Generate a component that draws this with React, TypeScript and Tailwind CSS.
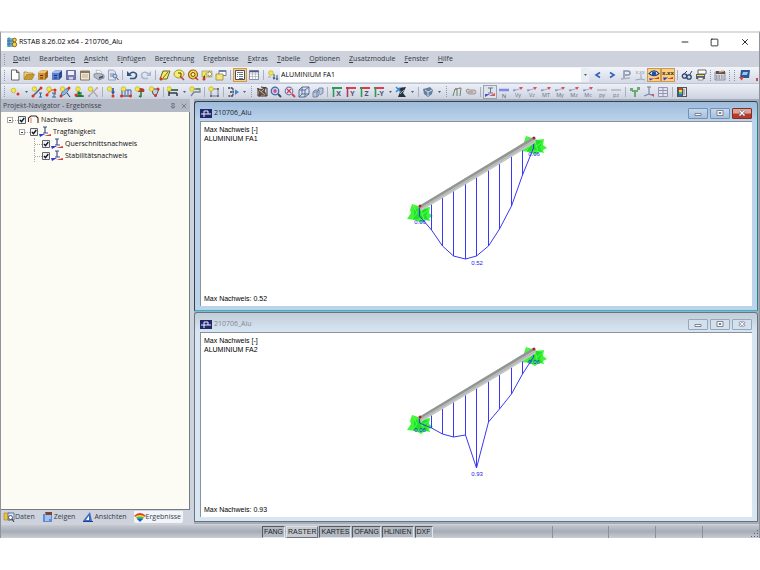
import type { ReactNode } from 'react';
import { Minus, Square, X, Pin } from 'lucide-react';
import clsx from 'clsx';

const ball = (x: number, y: number) => (
  <circle cx={x} cy={y} r="2.3" fill="#f7e840" stroke="#a39a1c" strokeWidth="0.5" />
);
const node = (x: number, y: number) => <circle cx={x} cy={y} r="1.5" fill="#e0301e" />;

const resultLabel = (text: string) => (
  <>
    <path d="M1 5l9-3" stroke="#9a9fb0" strokeWidth="0.8" />
    <path d="M7 1l4 0-2 3z" fill="#d9506a" />
    <path d="M1 3.5h3l-2 2z" fill="#7a7de0" />
    <text x="6" y="11" fontSize="5.5" textAnchor="middle" fill="#6c7080">
      {text}
    </text>
  </>
);

const axisLabel = (text: string, bar: string, leg: string) => (
  <>
    <path d="M1 2h10" stroke={bar} strokeWidth="2" />
    <path d="M2.5 1v10" stroke={leg} strokeWidth="1.6" />
    <text x="7.5" y="10" fontSize="7" fontWeight="bold" textAnchor="middle" fill="#4a536b">
      {text}
    </text>
  </>
);

// all drawings use a 12 x 12 box
const icons: Record<string, ReactNode> = {
  new: <path d="M2.5 1h5l2.500 2.500V11h-7.500zM7.500 1v2.500H10" fill="#fff" stroke="#444" strokeWidth="0.8" />,
  open: (
    <>
      <path d="M1 10V3h3l1 1h5v2" fill="#f3d36b" stroke="#8a6a1a" strokeWidth="0.6" />
      <path d="M1 10.500l2.500-5h8l-2.500 5z" fill="#c79a2c" stroke="#8a6a1a" strokeWidth="0.5" />
    </>
  ),
  project: (
    <>
      <path d="M1 4l3-2.500h7V8l-3 3H1z" fill="#9c6216" />
      <path d="M1 4l3-2.500h7L8 4z" fill="#f1c574" />
      <path d="M1 4h7v7H1z" fill="#cf9440" />
      <path d="M3 6.500h3M3 9h3" stroke="#5b3406" />
    </>
  ),
  block: (
    <>
      <path d="M1 4l3-2.500h7V8l-3 3H1z" fill="#274693" />
      <path d="M1 4l3-2.500h7L8 4z" fill="#a9bff0" />
      <path d="M1 4h7v7H1z" fill="#5c7ccc" />
      <path d="M3 6.500h3M3 9h3" stroke="#1b2f6c" />
    </>
  ),
  save: (
    <>
      <path d="M1.500 1.500h9v9h-9z" fill="#7a7cb4" stroke="#575a90" strokeWidth="0.8" />
      <path d="M3 2h6v4H3z" fill="#eef0fa" />
      <path d="M4 8h4v2.500H4z" fill="#cfd2ea" />
    </>
  ),
  report: (
    <>
      <path d="M1.500 2h9v9h-9z" fill="#efe6d2" stroke="#6b5a45" strokeWidth="0.8" />
      <path d="M1.500 2h9v2h-9z" fill="#8b7459" />
      <path d="M3 6h6M3 8h6" stroke="#a79c8b" strokeWidth="0.7" />
    </>
  ),
  print: (
    <>
      <path d="M3 1l5 1 1 4-5-1z" fill="#fff" stroke="#8c90a0" strokeWidth="0.5" />
      <path d="M1 5l5-1 5 2v3l-5 2-5-3z" fill="#b5bac6" stroke="#626878" strokeWidth="0.6" />
      <path d="M6 8l4-1.500v2L6 10z" fill="#4f566a" />
    </>
  ),
  preview: (
    <>
      <path d="M1.500 1h5l2 2v8h-7z" fill="#dfe3ee" stroke="#747b8f" strokeWidth="0.6" />
      <path d="M3 5h4M3 7h3" stroke="#5573a6" strokeWidth="0.8" />
      <circle cx="8" cy="7" r="2" fill="#b8d2ee" stroke="#47669a" strokeWidth="0.8" />
      <path d="M9.500 8.500l2 2.500" stroke="#555" />
    </>
  ),
  undo: (
    <>
      <path d="M1 2v5h5z" fill="#33527e" />
      <path d="M3 5.500q4-4 7-1 1.500 3-1.500 5H4" fill="none" stroke="#33527e" strokeWidth="1.600" />
    </>
  ),
  redo: (
    <>
      <path d="M11 2v5H6z" fill="#a6b7cf" />
      <path d="M9 5.500q-4-4-7-1-1.500 3 1.500 5H8" fill="none" stroke="#a6b7cf" strokeWidth="1.600" />
    </>
  ),
  plane: (
    <>
      <path d="M4 2h7L8 10H1z" fill="#f5ea63" stroke="#5b5713" strokeWidth="0.9" />
      <path d="M4 9l5-6" stroke="#333" strokeWidth="0.7" />
      {node(2, 10)}
    </>
  ),
  wedge: (
    <>
      <ellipse cx="6" cy="5" rx="5" ry="4" fill="#f8ee6e" stroke="#8c811b" strokeWidth="0.8" />
      <path d="M5 4h3v3" stroke="#4b4408" fill="none" />
      <path d="M7 7l4 4" stroke="#c0392b" strokeWidth="1.400" />
    </>
  ),
  target: (
    <>
      <circle cx="6" cy="5.500" r="4.500" fill="#f8dd51" stroke="#a0571a" strokeWidth="1.200" />
      <circle cx="6" cy="5.500" r="2" fill="#fff3a0" stroke="#6b4a12" />
      <path d="M8 8l3 3" stroke="#c0392b" strokeWidth="1.400" />
    </>
  ),
  select: (
    <>
      <path d="M1 2h10v6H1z" fill="#f3e65a" stroke="#8f8750" strokeWidth="0.6" />
      <path d="M5 4h3V2l3 3-3 3V6H5z" fill="#fff" stroke="#555" strokeWidth="0.5" />
      <path d="M2 8l2-2v5z" fill="#554a2a" />
      {node(3, 10)}
    </>
  ),
  layers: (
    <>
      <path d="M4 1.500h7v5H4z" fill="#fff" stroke="#53607c" strokeWidth="0.8" />
      <path d="M4 1.500h7v1.500H4z" fill="#6b83b5" />
      <path d="M1 5h7v6H1z" fill="#f5e67c" stroke="#8e803b" strokeWidth="0.7" />
    </>
  ),
  navigator: (
    <>
      <path d="M1.500 1.500h9v9h-9z" fill="#fff" stroke="#444c60" />
      <path d="M3 3.500h6M3 5.500h1M5 5.500h4M3 7.500h1M5 7.500h4M5 9.500h4" stroke="#5b647c" strokeWidth="0.9" />
    </>
  ),
  table: (
    <>
      <path d="M1.500 1.500h9v9h-9z" fill="#fff" stroke="#69728a" strokeWidth="0.8" />
      <path d="M1.500 2.500h9" stroke="#4e5a76" strokeWidth="1.600" />
      <path d="M1.500 5h9M1.500 7.500h9M4.500 3v7.500M7.500 3v7.500" stroke="#9aa1b3" strokeWidth="0.6" />
    </>
  ),
  loadcase: (
    <>
      {ball(4, 4)}
      <path d="M7 5v4M10 6v4" stroke="#39527e" strokeWidth="1" />
      <path d="M5.500 8.500h3L7 11zM8.500 9.500h3L10 11.500z" fill="#39527e" />
      <path d="M1 8h3" stroke="#aaa" />
    </>
  ),
  prev: <path d="M8 3.500L4 6l4 2.500" fill="none" stroke="#2f62bf" strokeWidth="1.600" />,
  next: <path d="M4 3.500L8 6 4 8.500" fill="none" stroke="#2f62bf" strokeWidth="1.600" />,
  faded: (
    <>
      <path d="M4 9V2h4a2 2 0 010 4H5" fill="none" stroke="#8293ad" strokeWidth="1.500" />
      <path d="M1 10l9-1" stroke="#a8b3c6" strokeWidth="1.500" />
    </>
  ),
  values: (
    <>
      <text x="6" y="4.500" fontSize="5" textAnchor="middle" fill="#858c9b">x.xx</text>
      <path d="M7 5v5L1.500 11M7 10l4 1" stroke="#9aa6bb" fill="none" />
    </>
  ),
  eye: (
    <>
      <path d="M1 4.500Q6-1 11 4.500 6 9 1 4.500z" fill="#fff" stroke="#20407c" strokeWidth="1.100" />
      <circle cx="6" cy="4.500" r="2.200" fill="#1d4f9f" />
      <path d="M1 9.500h5L2 11.500z" fill="#283fd0" />
      <path d="M5 10l6-2v2z" fill="#ca3e28" />
    </>
  ),
  xxx: (
    <>
      <text x="6" y="6" fontSize="6" fontWeight="bold" textAnchor="middle" fill="#423822">x.xx</text>
      <path d="M1 8.500h5L2 11.500z" fill="#283fd0" />
      <path d="M5 10l6-2v2z" fill="#ca3e28" />
    </>
  ),
  glasses: (
    <>
      <circle cx="3.500" cy="7" r="2.200" fill="#cfdcf0" stroke="#2d4369" strokeWidth="1.300" />
      <circle cx="8" cy="8" r="2.200" fill="#cfdcf0" stroke="#2d4369" strokeWidth="1.300" />
      <path d="M3 5l3-3M8.500 6L11 2" stroke="#2d4369" />
    </>
  ),
  printGraphic: (
    <>
      <path d="M3 1h8v4H3z" fill="#fff" stroke="#444" strokeWidth="0.8" />
      <path d="M1 5h9v5H1z" fill="#59616f" />
      <path d="M2 6.500h7" stroke="#efe04b" />
      <path d="M3 8.500h5V11H3z" fill="#fff" stroke="#444" strokeWidth="0.5" />
    </>
  ),
  calc: (
    <>
      <path d="M1 3h10v8H1z" fill="#d8d9dc" stroke="#596071" strokeWidth="0.6" />
      <path d="M2 2h9v3H2z" fill="#5e514a" />
      <path d="M5 3l5-1" stroke="#d5a27d" strokeWidth="1.500" />
      <path d="M2 7h8M2 9h8" stroke="#687086" strokeDasharray="1.500 1" />
    </>
  ),
  module: (
    <>
      <path d="M3 1h9l-1 8H2z" fill="#2b5798" />
      <path d="M5 3h5l-1 3H4z" fill="#9dc5e8" />
      <path d="M1 8h5l-2.500 3.500z" fill="#e44028" />
    </>
  ),
  point: (
    <>
      {ball(4.500, 4.500)}
      {node(9, 8)}
    </>
  ),
  line: (
    <>
      <path d="M2 10l8-8" stroke="#4a5a78" strokeWidth="1.500" />
      {ball(3.500, 3)}
      {node(2, 10)}
      {node(10, 2)}
      <path d="M8 7h3M9.500 7v4M8 11h3" stroke="#3266ad" />
    </>
  ),
  arc: (
    <>
      <path d="M2 9q3-6 8-5v5" fill="none" stroke="#e36b24" strokeWidth="1.300" />
      {ball(4, 3)}
      {node(2, 9)}
      {node(10, 4)}
      <path d="M7 7h4M9 7v4M7 11h4" stroke="#3266ad" />
    </>
  ),
  member: (
    <>
      <path d="M2 10q0-6 8-8-1 6-8 8z" fill="#8cb4e0" stroke="#456a98" strokeWidth="0.9" />
      {ball(3.500, 3)}
      {node(2, 10)}
      {node(10, 2)}
      <path d="M8 7l3 4" stroke="#333" />
    </>
  ),
  support: (
    <>
      <path d="M5 4l3 3-1 0 4 4H2l3-3H4z" fill="#2a9648" />
      <path d="M5 7h4M3 10h8" stroke="#155c2b" />
      {ball(5, 3)}
      {node(3, 9)}
    </>
  ),
  release: (
    <>
      <path d="M2 10l8-8M4 3l6 7" stroke="#aaa" strokeWidth="1.200" />
      {ball(3.500, 3)}
      <circle cx="2" cy="10" r="1" fill="#e0807a" />
      <circle cx="10" cy="2" r="1" fill="#e69a92" />
      <circle cx="10" cy="10" r="1" fill="#e69a92" />
    </>
  ),
  nodeLoad: (
    <>
      {ball(3.500, 3)}
      <path d="M7 2v5" stroke="#2e5597" strokeWidth="1.600" />
      <path d="M5 5.500h4L7 9z" fill="#2e5597" />
      {node(7, 10)}
    </>
  ),
  memberLoad: (
    <>
      <path d="M2 4h9v6M2 4v6M5 4v5M8 4v5" fill="none" stroke="#3a65a9" />
      <path d="M1 10h10" stroke="#333" />
      {ball(3.500, 3)}
      {node(1.500, 10)}
      {node(10.500, 10)}
    </>
  ),
  moment: (
    <>
      <path d="M6 2q6 0 4 4H4q0-4 2-4z" fill="#b33b30" />
      <path d="M7 5v6M5 10l2 1" stroke="#2c7b35" strokeWidth="1.500" />
      {ball(3.500, 3)}
    </>
  ),
  imposed: (
    <>
      <path d="M4 3h7L8 10 5 8z" fill="#c9d0df" stroke="#394256" strokeWidth="0.9" />
      {ball(3.500, 3)}
      {node(10, 3)}
      {node(7.500, 9.500)}
    </>
  ),
  frame: (
    <>
      <path d="M1 4h10M2 4v6M10 7v3M2 7h8" fill="none" stroke="#333a46" strokeWidth="1.500" />
      {ball(2, 3)}
      <path d="M4 4h6" stroke="#319040" strokeWidth="1" />
    </>
  ),
  comment: (
    <>
      <path d="M3 3h8v3H5l-3 4" fill="none" stroke="#79828f" strokeWidth="1.300" />
      {ball(3, 3)}
      <path d="M7 3h4" stroke="#3b8d45" />
    </>
  ),
  bounds: (
    <>
      <path d="M3 3h7v7H3z" fill="none" stroke="#58627a" strokeWidth="0.8" />
      {ball(3, 3)}
      <path d="M9 2h2v2H9zM9 9h2v2H9zM2 9h2v2H2z" fill="#68728a" />
    </>
  ),
  arrowSet: (
    <>
      <path d="M1 2h5v8H1M3 6h4" fill="none" stroke="#3b4558" strokeWidth="1.300" strokeDasharray="2 .6" />
      <path d="M8 3.500L12 6l-4 3z" fill="#4680cc" />
    </>
  ),
  shade: (
    <>
      <path d="M1 2l4 1 5-2-1 4 2 5-5-1-4 2 1-5z" fill="#634c41" />
      <path d="M2 2v8M5 1l6 1v8H3" fill="none" stroke="#40332c" />
      <path d="M3 4l6 5M8 3L5 6" stroke="#cfc6be" strokeWidth="0.8" />
    </>
  ),
  zoomIn: (
    <>
      <circle cx="5" cy="5" r="3.800" fill="#bfd0f2" stroke="#4560ac" strokeWidth="1.200" />
      <path d="M5 3v4M3 5h4" stroke="#d93848" strokeWidth="1.200" />
      <path d="M8 8l3 3" stroke="#3d475c" strokeWidth="1.800" />
    </>
  ),
  zoomWindow: (
    <>
      <circle cx="5" cy="5" r="3.800" fill="#e5ecf8" stroke="#6d7fba" strokeWidth="1.200" />
      <path d="M3 3l4 4M7 3L3 7" stroke="#d93848" strokeWidth="1.300" />
      <path d="M8 8l3 3" stroke="#d93848" strokeWidth="1.800" />
    </>
  ),
  cube: <path d="M1 4h6v7H1zM1 4l3-3h7L7 4M11 1v7l-4 3M4 1v7h7M4 8l-3 3" fill="#dce5f3" fillOpacity="0.5" stroke="#4b628e" strokeWidth="0.9" />,
  cubes: <path d="M1 6h4v5H1zM1 6l2-2h4v5l-2 2M6 4l1-2h4v5L8 9M5 6l2-2" fill="#b7c7de" stroke="#637699" strokeWidth="0.8" />,
  axX: axisLabel('X', '#2b9b55', '#2b9b55'),
  axY: axisLabel('Y', '#dd3d50', '#b43a58'),
  axZ: axisLabel('Z', '#dd3d3d', '#2b9b55'),
  axMinusY: axisLabel('-Y', '#dd3d50', '#2b9b55'),
  render: (
    <>
      <path d="M3 2l8-1-3 6 3 4H3l2-5z" fill="#28303c" />
      <path d="M1 1l5 5M1 6l4-4" stroke="#3a8bd6" strokeWidth="1.600" />
      <path d="M5 8l4-4" stroke="#c7d2de" strokeWidth="0.8" />
    </>
  ),
  gear: (
    <>
      <path d="M1 3l4-1 3-1 3 3-1 4-4 3-4-3z" fill="#65809f" />
      <path d="M3 4l3 2 4-2M6 6v4" stroke="#d5dfeb" fill="none" />
    </>
  ),
  frameView: (
    <>
      <path d="M2 10L4 3l6-1-1 8M4 3h2v7" fill="none" stroke="#5a7c64" strokeWidth="0.9" />
      <path d="M4 3l6-1" stroke="#d38178" strokeWidth="0.8" />
    </>
  ),
  section: (
    <>
      <path d="M1 4q2-2 4 0h5q2 3 0 4H4Q1 7 1 4z" fill="#c9cac9" stroke="#8b8f8e" strokeWidth="0.8" />
      <path d="M3 6h5" stroke="#c25b55" strokeWidth="0.7" />
    </>
  ),
  beam: (
    <>
      <path d="M4 2h5M6.500 2v5M4 7h5" stroke="#647291" strokeWidth="1" />
      <path d="M5 10l6-3v3z" fill="#d65a5a" />
      <path d="M1 8h5l-5 3z" fill="#4b50d8" />
    </>
  ),
  n: (
    <>
      <path d="M1 4h10" stroke="#8286e4" strokeWidth="2.500" />
      <text x="6" y="11.500" fontSize="6" textAnchor="middle" fill="#5a5f70">N</text>
    </>
  ),
  vy: resultLabel('Vy'),
  vz: resultLabel('Vz'),
  mt: resultLabel('MT'),
  my: resultLabel('My'),
  mz: resultLabel('Mz'),
  mu: resultLabel('Mc'),
  py: (
    <>
      <path d="M1 4h10" stroke="#a6a8bd" strokeWidth="1.200" />
      <text x="6" y="11" fontSize="5.500" textAnchor="middle" fill="#6c7080">py</text>
    </>
  ),
  pz: (
    <>
      <path d="M1 4h10" stroke="#a6a8bd" strokeWidth="1.200" />
      <text x="6" y="11" fontSize="5.500" textAnchor="middle" fill="#6c7080">pz</text>
    </>
  ),
  reaction: <path d="M1 2h3v3H1zM8 1h3v3H8zM5 4h2v7H5zM3 4h6v2H3z" fill="#6fa873" />,
  profile: (
    <>
      <path d="M4 1h4M6 1v7M6 8l5 2M6 8l-5 2" stroke="#7181a8" strokeWidth="1.100" />
      <path d="M8 8h3v3z" fill="#d9506a" />
    </>
  ),
  gridView: <path d="M1.500 1.500h9v9h-9zM1.500 4.500h9M1.500 7.500h9M6 1.500v9" fill="#e1e3f0" stroke="#8e8fae" strokeWidth="0.9" />,
  scale: (
    <>
      <path d="M1 1h10v10H1z" fill="#50545c" />
      <path d="M3 2h3v2H3z" fill="#e4402a" />
      <path d="M3 4h3v2H3z" fill="#f2e23d" />
      <path d="M3 6h3v2H3z" fill="#43c35a" />
      <path d="M3 8h3v2H3z" fill="#3765da" />
      <path d="M7 2h3v8H7z" fill="#e3e4e8" />
      <path d="M7 4h2M7 6h2M7 8h2" stroke="#555" strokeWidth="0.7" />
    </>
  ),
  portal: (
    <>
      <path d="M1.500 8V4L4 2h5l2 2v5" fill="none" stroke="#3a2a2a" strokeWidth="1.100" />
      <path d="M4 9V4" stroke="#d47f76" />
    </>
  ),
  check: (
    <>
      <path d="M4 1h4M6 1v6M4 7h5" stroke="#3c4f91" strokeWidth="1.200" />
      <path d="M5 10l7-2v2z" fill="#d93a3a" />
      <path d="M0 8h6l-5 3z" fill="#3238d2" />
    </>
  ),
  tabData: (
    <>
      <path d="M1 2h6v7H1z" fill="#f0c040" stroke="#a67c13" strokeWidth="0.6" />
      <path d="M5 2h6v7H5z" fill="#dbe7fa" stroke="#3b5fa6" strokeWidth="0.8" />
      <circle cx="7.500" cy="6.500" r="2" fill="#fff" stroke="#333" strokeWidth="0.8" />
      <path d="M9 8l2 3" stroke="#333" />
    </>
  ),
  tabShow: (
    <>
      <path d="M1 3h9v8H1z" fill="#5e8cd8" />
      <path d="M3 5h6M3 7h6M3 9h4" stroke="#fff" strokeWidth="0.9" />
      <path d="M3 1h7v3H4z" fill="#764637" />
    </>
  ),
  tabViews: (
    <>
      <path d="M1 10h9L8 1 4 6z" fill="#3f69c7" />
      <path d="M6 6l1-1v4H4z" fill="#fff" />
      <path d="M1 10.500h10" stroke="#243f80" />
    </>
  ),
  tabResults: (
    <>
      <path d="M0 5q6-6 12 0L9 7H3z" fill="#e23a26" />
      <path d="M1 5.500q5-3 10 0L8 8H4z" fill="#f4e23a" />
      <path d="M2 6.500q4-2 8 0L8 9H4z" fill="#3dc35a" />
      <path d="M3 8q3-1 6 0l-3 3z" fill="#2b55d9" />
    </>
  ),
  app: (
    <>
      <path d="M1 2h7v9H1z" fill="#72b2d8" />
      <path d="M3 1v10M1 5h7M1 8h6" stroke="#33698e" strokeWidth="0.8" />
      <circle cx="8.500" cy="4" r="1.800" fill="#f4d54a" stroke="#8a6414" />
      <circle cx="8.500" cy="8.500" r="2.200" fill="#f4d54a" stroke="#8a6414" />
    </>
  ),
  doc: (
    <>
      <path d="M0 2h12v9H0z" fill="#20286b" />
      <path d="M1 7h10M4 4v6M8 4v3M4 4h4" stroke="#eef0ff" strokeWidth="1" fill="none" />
    </>
  ),
};

function Icon({ name }: { name: string }) {
  return (
    <svg viewBox="0 0 12 12" className="h-3 w-3 shrink-0" aria-hidden="true">
      {icons[name]}
    </svg>
  );
}

function Tool({ name, active = false }: { name: string; active?: boolean }) {
  return (
    <button
      type="button"
      aria-label={name}
      className={clsx(
        'flex h-[14px] w-[14px] shrink-0 items-center justify-center',
        active && 'bg-[#fbcf7d] outline -outline-offset-1 outline-[#c99a55]'
      )}
    >
      <Icon name={name} />
    </button>
  );
}

function Grip({ wide = false }: { wide?: boolean }) {
  return (
    <span className={clsx('flex shrink-0 justify-center', wide ? 'w-[7px]' : 'w-[5px]')}>
      <span className="h-[11px] border-l border-dotted border-[#8e95a5]" />
    </span>
  );
}

function Sep() {
  return (
    <span className="flex w-[5px] shrink-0 justify-center">
      <span className="h-[10px] border-l border-[#a9b0bf]" />
    </span>
  );
}

function Drop() {
  return (
    <button type="button" aria-label="more" className="flex h-[14px] w-2 shrink-0 items-center justify-center">
      <svg viewBox="0 0 6 4" className="h-[2px] w-[3px]" aria-hidden="true">
        <path d="M0 0h6L3 4z" fill="#555c6b" />
      </svg>
    </button>
  );
}

// "|" separator, ":" grip, "v" drop-down arrow, "*" marks a pressed button
function Tools({ items }: { items: string }) {
  return (
    <>
      {items.split(' ').map((item, i) => {
        if (item === '|') return <Sep key={i} />;
        if (item === ':') return <Grip key={i} />;
        if (item === '::') return <Grip key={i} wide />;
        if (item === 'v') return <Drop key={i} />;
        return <Tool key={i} name={item.replace('*', '')} active={item.startsWith('*')} />;
      })}
    </>
  );
}

// [label, index of the underlined letter]
const menu: [string, number][] = [
  ['Datei', 0],
  ['Bearbeiten', 9],
  ['Ansicht', 0],
  ['Einfügen', 1],
  ['Berechnung', 2],
  ['Ergebnisse', 2],
  ['Extras', 0],
  ['Tabelle', 0],
  ['Optionen', 0],
  ['Zusatzmodule', 0],
  ['Fenster', 0],
  ['Hilfe', 0],
];

interface TreeRowProps {
  id: string;
  label: string;
  icon: string;
  level: number;
  open?: boolean;
}

const tree: TreeRowProps[] = [
  { id: 'n1', label: 'Nachweis', icon: 'portal', level: 0, open: true },
  { id: 'n2', label: 'Tragfähigkeit', icon: 'check', level: 1, open: true },
  { id: 'n3', label: 'Querschnittsnachweis', icon: 'check', level: 2 },
  { id: 'n4', label: 'Stabilitätsnachweis', icon: 'check', level: 2 },
];

function TreeRow({ id, label, icon, level, open }: TreeRowProps) {
  return (
    <li className={clsx('flex h-[12px] items-center', level === 1 && 'pl-3', level === 2 && 'pl-6')}>
      <span className="flex w-[11px] items-center">
        {open ? (
          <span className="flex h-[6px] w-[6px] items-center justify-center border border-[#a5a8ad] bg-white">
            <span className="h-px w-[2px] bg-[#444]" />
          </span>
        ) : (
          <span className="ml-[3px] h-[12px] w-px border-l border-dotted border-[#aaa]" />
        )}
        <span className="h-px flex-1 border-t border-dotted border-[#aaa]" />
      </span>
      <input id={id} type="checkbox" defaultChecked className="peer sr-only" />
      <label htmlFor={id} className="flex items-center gap-px">
        <svg viewBox="0 0 8 8" className="h-2 w-2 shrink-0" aria-hidden="true">
          <path d="M.5.5h7v7h-7z" fill="#eef0f4" stroke="#5d6470" />
          <path d="M2 4l1.500 1.700L6.300 2" fill="none" stroke="#111" strokeWidth="1.300" />
        </svg>
        <Icon name={icon} />
        <span className="pl-px">{label}</span>
      </label>
    </li>
  );
}

interface Diagram {
  title: string;
  max: string;
  values: number[];
  end: string;
  startY: number;
  endY: number;
}

const xs = [419, 431, 442, 453, 465, 476, 488, 499, 511, 522, 533];

const diagrams: Diagram[] = [
  {
    title: 'ALUMINIUM FA1',
    max: '0.52',
    values: [10, 24, 40, 50, 53, 50, 40, 23, 0, -31, -58],
    end: '0.06',
    startY: 224,
    endY: 156,
  },
  {
    title: 'ALUMINIUM FA2',
    max: '0.93',
    values: [6, 11, 17, 20, 18, 51, 5, -8, -23, -43, -60],
    end: '0.06',
    startY: 221,
    endY: 153,
  },
];

// green stars at the two member ends are the nodal supports
function Support({ x, y }: { x: number; y: number }) {
  return (
    <g transform={`translate(${x} ${y})`}>
      <path d="M-8-3l6 2 4 2 8-1-1 6 4 3-4 2 1 3-5-1-4 3-5-3-9-1 4-6-1-3z" fill="#3ff53a" />
      <path d="M-6 3l7-3 8 3-3 5 2 5-7-2-8 2 1-5z" fill="#18de20" fillOpacity="0.8" />
      <path d="M-7-2l4 8-5 6M1 2l3 11M9 3L1 8" fill="none" stroke="#62ff5a" strokeWidth="0.8" />
    </g>
  );
}

function BeamDiagram({ values, max, end, startY, endY }: Diagram) {
  const base = 206;
  const points = xs.map((x, i) => `${x - 0.5},${base + values[i]}`).join(' ');
  return (
    <svg viewBox="396 123 160 150" className="h-[150px] w-[160px]" fontFamily="'Liberation Sans', Arial, sans-serif">
      <Support x={419} y={207} />
      <Support x={533} y={139} />
      <g stroke="#3a38f5" strokeWidth="1" fill="none">
        {xs.map((x, i) => (
          <path key={x} d={`M${x - 0.5} ${base - (x - 419) * 0.6}V${base + values[i]}`} />
        ))}
        <polyline points={points} />
      </g>
      <path d="M418 206L532 137l3 2-1 4L420 211z" fill="#c4c8c4" />
      <path d="M418 206L532 137l2 2L419 208z" fill="#929692" />
      <path d="M419 209L533 141" stroke="#adb1ad" strokeWidth="1" />
      <circle cx="419" cy="206" r="1.500" fill="#b0202a" />
      <circle cx="533" cy="138" r="1.500" fill="#b0202a" />
      <g fontSize="6" fill="#1a1ae8" textAnchor="middle">
        <text x="419" y={startY}>{end}</text>
        <text x="533" y={endY}>{end}</text>
        <text x="476" y="265">{max}</text>
      </g>
    </svg>
  );
}

function WindowButton({ kind, active }: { kind: 'min' | 'max' | 'close'; active: boolean }) {
  return (
    <button
      type="button"
      aria-label={kind}
      className={clsx(
        'flex h-[11px] w-5 items-center justify-center rounded-[1px] border',
        active && kind === 'close'
          ? 'border-[#7e2f2b] bg-linear-to-b from-[#e0a397] from-45% to-[#bc3a25] to-55%'
          : active
          ? 'border-[#7590b2] bg-linear-to-b from-[#c5d9ee] to-[#a5c0de]'
          : 'border-[#98a8bb] bg-[#d3e0ee]'
      )}
    >
      <svg viewBox="0 0 8 6" className="h-[6px] w-2" aria-hidden="true">
        {kind === 'min' && <path d="M1 3.500h6v2H1z" fill="#fff" stroke="#646c7c" strokeWidth="0.8" />}
        {kind === 'max' && <path d="M1 .5h6v5H1zM3 2.500h2v1H3z" fill="#fff" stroke="#646c7c" strokeWidth="0.8" />}
        {kind === 'close' && (
          <>
            <path d="M1.500.5l5 5M6.500.5l-5 5" stroke="#5c6478" strokeWidth="2.600" />
            <path d="M1.500.5l5 5M6.500.5l-5 5" stroke="#fff" strokeWidth="1.300" />
          </>
        )}
      </svg>
    </button>
  );
}

function ChildWindow({ diagram, active = false }: { diagram: Diagram; active?: boolean }) {
  return (
    <section
      className={clsx(
        'flex min-h-0 flex-1 flex-col rounded-t-[3px] border px-[5px] pb-1',
        active
          ? 'border-[#33424f] border-r-[#2b7f8d] border-b-[#22bcd0] bg-linear-to-b from-[#9dbbdb] to-[#bcd3eb] to-[19px]'
          : 'border-[#6b737d] bg-linear-to-b from-[#c1ced9] to-[#d8e5f3] to-[19px]'
      )}
    >
      <header className="flex h-[19px] shrink-0 items-center gap-[2px] pt-[3px]">
        <Icon name="doc" />
        <h2 className={clsx('flex-1', active ? 'text-[#1e2733]' : 'text-[#858a90]')}>210706_Alu</h2>
        <span className="flex gap-[2px]">
          <WindowButton kind="min" active={active} />
          <WindowButton kind="max" active={active} />
          <WindowButton kind="close" active={active} />
        </span>
      </header>
      <div className="relative flex min-h-0 flex-1 flex-col justify-between border-t border-l border-[#8d9299] bg-white px-[3px] pt-[3px] pb-[3px] font-['Liberation_Sans',Arial,sans-serif] text-[7px] leading-[9px] text-black">
        <p>
          Max Nachweis [-]
          <br />
          {diagram.title}
        </p>
        <p>Max Nachweis: {diagram.max}</p>
        <div className="pointer-events-none absolute inset-x-0 top-px flex justify-center">
          <BeamDiagram {...diagram} />
        </div>
      </div>
    </section>
  );
}

const tabs = [
  { label: 'Daten', icon: 'tabData' },
  { label: 'Zeigen', icon: 'tabShow' },
  { label: 'Ansichten', icon: 'tabViews' },
  { label: 'Ergebnisse', icon: 'tabResults' },
];

function Navigator() {
  return (
    <aside className="flex w-[189px] shrink-0 flex-col">
      <header className="flex h-[13px] shrink-0 items-center bg-[#b4bac5] pr-[2px] pl-[2px] text-[#3c424d]">
        <h2 className="flex-1">Projekt-Navigator - Ergebnisse</h2>
        <button type="button" aria-label="pin" className="mr-1">
          <Pin className="h-[6px] w-[6px]" />
        </button>
        <button type="button" aria-label="close">
          <X className="h-2 w-2" strokeWidth={1.5} />
        </button>
      </header>
      <ul className="min-h-0 flex-1 border-r border-b border-[#757b86] bg-[#fcfbf4] pt-[2px] pl-[6px] text-[#0c0e14]">
        {tree.map((row) => (
          <TreeRow key={row.id} {...row} />
        ))}
      </ul>
      <nav className="flex h-[14px] shrink-0 items-center gap-[7px] pl-[2px] text-[#363d4a]">
        {tabs.map((tab, i) => (
          <button
            key={tab.label}
            type="button"
            className={clsx('flex h-[12px] items-center', i === 3 && 'rounded-b-[2px] bg-[#f1f4f9] pr-[2px]')}
          >
            <Icon name={tab.icon} />
            {tab.label}
          </button>
        ))}
      </nav>
    </aside>
  );
}

const snaps = ['FANG', 'RASTER', 'KARTES', 'OFANG', 'HLINIEN', 'DXF'];

function StatusBar() {
  return (
    <footer className="flex h-[14px] shrink-0 items-center border-t border-[#cfd3d9] bg-linear-to-b from-[#c5c9d0] via-[#a6adb7] to-[#c9cdd3] pl-[261px] font-['Liberation_Sans',Arial,sans-serif] text-[7px] leading-[10px] text-[#1a1d22]">
      {snaps.map((snap) => (
        <button
          key={snap}
          type="button"
          className={clsx(
            'mr-px h-[12px] border px-px',
            snap === 'RASTER'
              ? 'border-[#dfe2e6] border-r-[#6f757e] border-b-[#6f757e] bg-[#c6cad0]'
              : 'border-[#555b64] border-r-[#e3e6ea] border-b-[#e3e6ea] bg-[#b2b8c1]'
          )}
        >
          {snap}
        </button>
      ))}
      <span className="flex-1" />
      <span className="h-[12px] w-[56px] border-l border-[#8b919c]" />
      <span className="h-[12px] w-[47px] border-l border-[#8b919c]" />
      <span className="h-[12px] w-[47px] border-l border-[#8b919c]" />
      <span className="flex h-[12px] w-[57px] items-end justify-end border-l border-[#8b919c]">
        <svg viewBox="0 0 8 8" className="h-2 w-2" aria-hidden="true">
          <path d="M6 0h1v1H6zM3 3h1v1H3zM6 3h1v1H6zM0 6h1v1H0zM3 6h1v1H3zM6 6h1v1H6z" fill="#59606c" />
        </svg>
      </span>
    </footer>
  );
}

export default function App() {
  return (
    <div className="h-screen bg-white pt-[31px] pb-8 font-['Open_Sans','Noto_Sans',sans-serif] text-[7px] leading-[10px]">
      <div className="flex h-full flex-col border-x border-t-2 border-x-[#8f949c] border-t-[#dcdcdc] bg-[#cdd2dc]">
        <header className="flex h-[18px] shrink-0 items-center gap-px bg-white pl-[5px] text-black">
          <Icon name="app" />
          <h1 className="flex-1">RSTAB 8.26.02 x64 - 210706_Alu</h1>
          <button type="button" aria-label="Minimieren" className="flex w-[29px] justify-center">
            <Minus className="h-[10px] w-[10px]" />
          </button>
          <button type="button" aria-label="Maximieren" className="flex w-[29px] justify-center">
            <Square className="h-[9px] w-[9px]" />
          </button>
          <button type="button" aria-label="Schließen" className="flex w-[29px] justify-center">
            <X className="h-[10px] w-[10px]" strokeWidth={2} />
          </button>
        </header>

        <nav className="flex h-4 shrink-0 items-center text-[#343a46]">
          <Grip wide />
          <span className="flex gap-[9px] pl-[5px]">
            {menu.map(([label, at]) => (
              <button key={label} type="button">
                {label.slice(0, at)}
                <u>{label[at]}</u>
                {label.slice(at + 1)}
              </button>
            ))}
          </span>
        </nav>

        <div className="flex h-4 shrink-0 items-center bg-linear-to-b from-[#f2f4f9] to-[#d3d9e6]">
          <Grip wide />
          <Tools items="new open project block save report print preview | undo redo | plane wedge target select layers | *navigator table | loadcase" />
          <select
            aria-label="Lastfall"
            className="h-[14px] min-w-0 flex-1 appearance-none bg-white pl-px text-black"
            defaultValue="ALUMINIUM FA1"
          >
            <option>ALUMINIUM FA1</option>
            <option>ALUMINIUM FA2</option>
          </select>
          <span className="flex bg-[#e9edf4]">
            <Drop />
          </span>
          <span className="w-[2px]" />
          <Tools items="prev next faded values *eye *xxx | glasses printGraphic : calc : : module" />
          <span className="flex w-2 justify-end pr-px">
            <span className="mt-2 h-[3px] w-[2px] bg-[#d8434c]" />
          </span>
        </div>

        <div className="flex h-4 shrink-0 items-center border-t border-[#bfc5d1] bg-linear-to-b from-[#eceff6] to-[#ccd3e1]">
          <Grip wide />
          <Tools items="point v line arc member support release | nodeLoad memberLoad moment imposed | frame v comment | bounds | arrowSet v :: shade zoomIn zoomWindow cube cubes | axX axY axZ axMinusY v render v | gear v :: frameView section |" />
          <span className="flex bg-[#dfe3ea] outline -outline-offset-1 outline-[#9ba3b0]">
            <Tool name="beam" />
          </span>
          <Tools items="n vy vz mt my mz mu py pz | reaction profile gridView | scale" />
        </div>

        <main className="flex min-h-0 flex-1 gap-1">
          <Navigator />
          <div className="flex min-w-0 flex-1 flex-col gap-px bg-[#a5acb8] pt-[2px] pr-px pb-[2px]">
            <ChildWindow diagram={diagrams[0]} active />
            <ChildWindow diagram={diagrams[1]} />
          </div>
        </main>

        <StatusBar />
      </div>
    </div>
  );
}
